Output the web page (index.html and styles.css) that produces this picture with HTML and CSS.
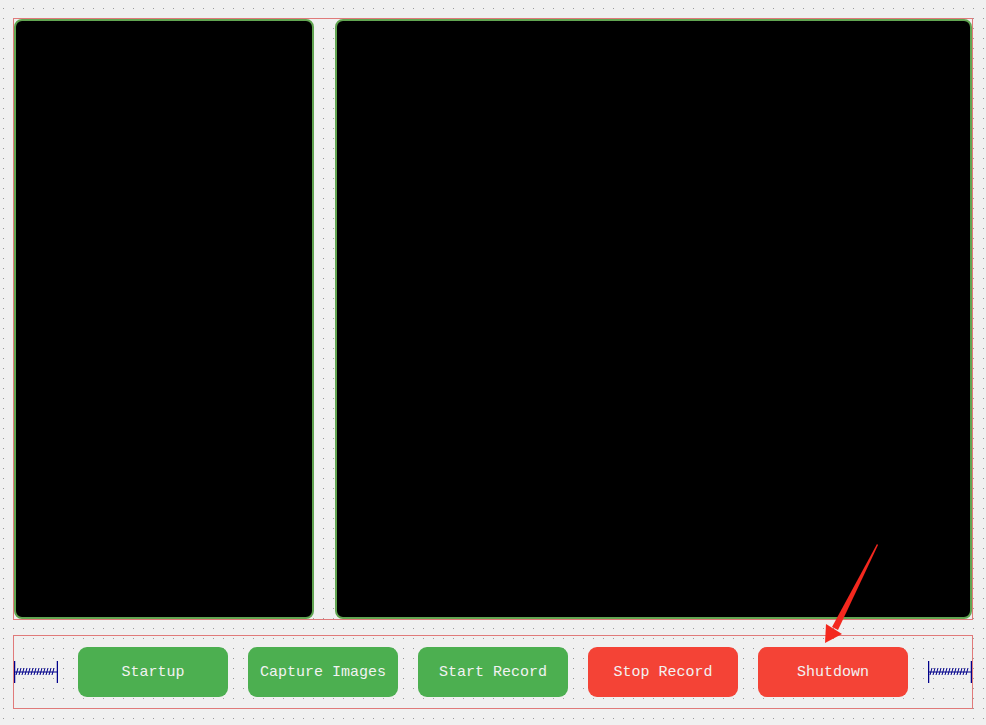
FILE: index.html
```html
<!DOCTYPE html>
<html>
<head>
<meta charset="utf-8">
<link rel="stylesheet" href="styles.css">
</head>
<body>
<div class="canvas">
  <div class="frame top-frame">
    <div class="panel panel-left"></div>
    <div class="panel panel-right"></div>
  </div>
  <div class="frame bottom-frame">
    <div class="spacer">
      <svg width="44" height="22" viewBox="0 0 44 22">
        <line x1="0.5" y1="0" x2="0.5" y2="22" stroke="#00008b" stroke-width="1.5"/>
        <line x1="43.5" y1="0" x2="43.5" y2="22" stroke="#00008b" stroke-width="1.5"/>
        <path d="M1 11 L43 11" stroke="#00008b" stroke-width="1"/>
        <path d="M2 14 L4 7 M5 14 L7 7 M8 14 L10 7 M11 14 L13 7 M14 14 L16 7 M17 14 L19 7 M20 14 L22 7 M23 14 L25 7 M26 14 L28 7 M29 14 L31 7 M32 14 L34 7 M35 14 L37 7 M38 14 L40 7" stroke="#00008b" stroke-width="1" fill="none"/>
      </svg>
    </div>
    <button class="btn btn-green">Startup</button>
    <button class="btn btn-green">Capture Images</button>
    <button class="btn btn-green">Start Record</button>
    <button class="btn btn-red">Stop Record</button>
    <button class="btn btn-red">Shutdown</button>
    <div class="spacer">
      <svg width="44" height="22" viewBox="0 0 44 22">
        <line x1="0.5" y1="0" x2="0.5" y2="22" stroke="#00008b" stroke-width="1.5"/>
        <line x1="43.5" y1="0" x2="43.5" y2="22" stroke="#00008b" stroke-width="1.5"/>
        <path d="M1 11 L43 11" stroke="#00008b" stroke-width="1"/>
        <path d="M2 14 L4 7 M5 14 L7 7 M8 14 L10 7 M11 14 L13 7 M14 14 L16 7 M17 14 L19 7 M20 14 L22 7 M23 14 L25 7 M26 14 L28 7 M29 14 L31 7 M32 14 L34 7 M35 14 L37 7 M38 14 L40 7" stroke="#00008b" stroke-width="1" fill="none"/>
      </svg>
    </div>
  </div>
  <svg class="arrow" width="986" height="725" viewBox="0 0 986 725">
    <polygon points="877,544 878,545 838,630 832,627" fill="#f4281e"/>
    <polygon points="825,643 826,624 842,634" fill="#f4281e"/>
  </svg>
</div>
</body>
</html>
```

FILE: styles.css
```css
html, body {
  margin: 0;
  padding: 0;
}
body {
  width: 986px;
  height: 725px;
  overflow: hidden;
  background-color: #f0f0f0;
  background-image: radial-gradient(circle at 3.5px 8.5px, #9a9a9a 0.6px, rgba(240,240,240,0) 0.9px);
  background-size: 10px 10px;
  font-family: "Liberation Mono", "DejaVu Sans Mono", monospace;
}
.canvas {
  position: relative;
  padding: 18px 0 0 13px;
  display: flex;
  flex-direction: column;
  gap: 15px;
}
.frame {
  box-sizing: border-box;
  width: 960px;
  border: 1px solid #e07a7a;
}
.top-frame {
  height: 602px;
  display: flex;
  gap: 21px;
}
.panel {
  box-sizing: border-box;
  height: 600px;
  background: #000;
  border: 2px solid #62a552;
  border-radius: 8px;
}
.panel-left { width: 300px; }
.panel-right { width: 637px; }
.bottom-frame {
  height: 74px;
  display: flex;
  align-items: center;
  gap: 20px;
}
.spacer {
  width: 44px;
  height: 22px;
  display: flex;
}
.spacer svg { display: block; }
.btn {
  width: 150px;
  height: 50px;
  border: none;
  border-radius: 9px;
  color: #f2f2f2;
  font-family: "Liberation Mono", "DejaVu Sans Mono", monospace;
  font-size: 15px;
  padding: 0;
}
.btn-green { background: #4caf50; }
.btn-red { background: #f44336; }
.arrow {
  position: absolute;
  left: 0;
  top: 0;
  pointer-events: none;
}
```
